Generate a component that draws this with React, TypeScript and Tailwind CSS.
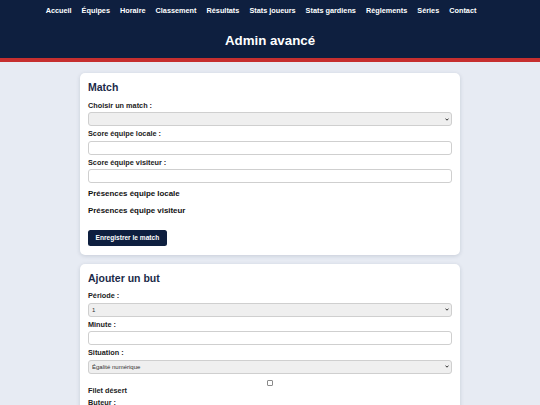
import React from 'react';

const navItems = [
  'Accueil',
  'Équipes',
  'Horaire',
  'Classement',
  'Résultats',
  'Stats joueurs',
  'Stats gardiens',
  'Règlements',
  'Séries',
  'Contact',
];

const Label: React.FC<{ children: React.ReactNode; className?: string }> = ({ children, className = '' }) => (
  <label className={`block text-[7.3px] leading-[8.5px] font-bold text-[#222] mb-[2px] ${className || 'mt-[4px]'}`}>
    {children}
  </label>
);

// native chevron is too big at this size, so draw a small one
const Select: React.FC<{ value?: string; options: string[] }> = ({ value, options }) => (
  <div className="relative">
    <select
      defaultValue={value}
      className="appearance-none block w-full h-[14px] text-[6px] leading-[8px] pl-[3px] pr-[10px] bg-[#efefef] border border-[#cfcfcf] rounded-[3px] text-[#333]"
    >
      {options.map((o) => (
        <option key={o}>{o}</option>
      ))}
    </select>
    <svg
      className="absolute right-[3px] top-[5.5px] w-[4px] h-[3px] pointer-events-none"
      viewBox="0 0 8 6"
      fill="none"
      stroke="#333"
      strokeWidth="2"
    >
      <path d="M1 1.2 4 4.4 7 1.2" />
    </svg>
  </div>
);

const Input: React.FC = () => (
  <input
    type="text"
    className="block w-full h-[14px] text-[6px] px-[2px] bg-white border border-[#cfcfcf] rounded-[3px]"
  />
);

const Card: React.FC<{ title: string; children: React.ReactNode }> = ({ title, children }) => (
  <div className="w-[380px] mx-auto bg-white rounded-[5px] shadow-[0_1px_4px_rgba(15,31,61,0.15)] px-[8px] pt-[8px] pb-[8px]">
    <h2 className="text-[10.5px] leading-[12px] font-bold text-[#1b2a49] mb-[8.5px]">{title}</h2>
    {children}
  </div>
);

export default function App() {
  return (
    <div className="min-h-[405px] bg-[#e7ebf3] font-['Liberation_Sans',Arial,sans-serif]">
      <header className="bg-[#0e1f3f] h-[58px] flex flex-col">
        <nav className="h-[22px] flex items-center justify-center gap-[10px] pr-[18px]">
          {navItems.map((item) => (
            <a key={item} href="#" className="text-[7.3px] leading-[8.5px] font-bold text-white">
              {item}
            </a>
          ))}
        </nav>
        <div className="flex-1 flex items-center justify-center">
          <h1 className="text-[13.3px] leading-[15px] font-bold text-white">Admin avancé</h1>
        </div>
      </header>
      <div className="h-[4px] bg-[#c62f2f]" />

      <main className="pt-[11px] pb-[20px] flex flex-col gap-[9px]">
        <Card title="Match">
          <Label>Choisir un match :</Label>
          <Select options={['']} />
          <Label>Score équipe locale :</Label>
          <Input />
          <Label>Score équipe visiteur :</Label>
          <Input />
          <h3 className="text-[7.9px] leading-[10px] font-bold text-[#111] mt-[6px]">Présences équipe locale</h3>
          <h3 className="text-[7.9px] leading-[10px] font-bold text-[#111] mt-[7px]">Présences équipe visiteur</h3>
          <button className="mt-[13.5px] h-[16px] px-[7.5px] bg-[#0e1f3f] text-white text-[6.6px] font-bold rounded-[2.5px]">
            Enregistrer le match
          </button>
        </Card>

        <Card title="Ajouter un but">
          <Label>Période :</Label>
          <Select value="1" options={['1', '2', '3', 'Prolongation']} />
          <Label>Minute :</Label>
          <Input />
          <Label>Situation :</Label>
          <Select value="Égalité numérique" options={['Égalité numérique', 'Avantage numérique', 'Désavantage numérique']} />
          <div className="flex justify-center mt-[6.5px]">
            <input
              type="checkbox"
              className="appearance-none block w-[5.5px] h-[5.5px] border border-[#8a8a8a] rounded-[1px] bg-white"
            />
          </div>
          <Label className="mt-[1px]">Filet désert</Label>
          <Label>Buteur :</Label>
          <Select options={['']} />
          <Label>Passe 1 :</Label>
          <Select options={['']} />
          <Label>Passe 2 :</Label>
          <Select options={['']} />
          <button className="mt-[10px] h-[16px] px-[7.5px] bg-[#0e1f3f] text-white text-[6.6px] font-bold rounded-[2.5px]">
            Ajouter le but
          </button>
        </Card>
      </main>
    </div>
  );
}
